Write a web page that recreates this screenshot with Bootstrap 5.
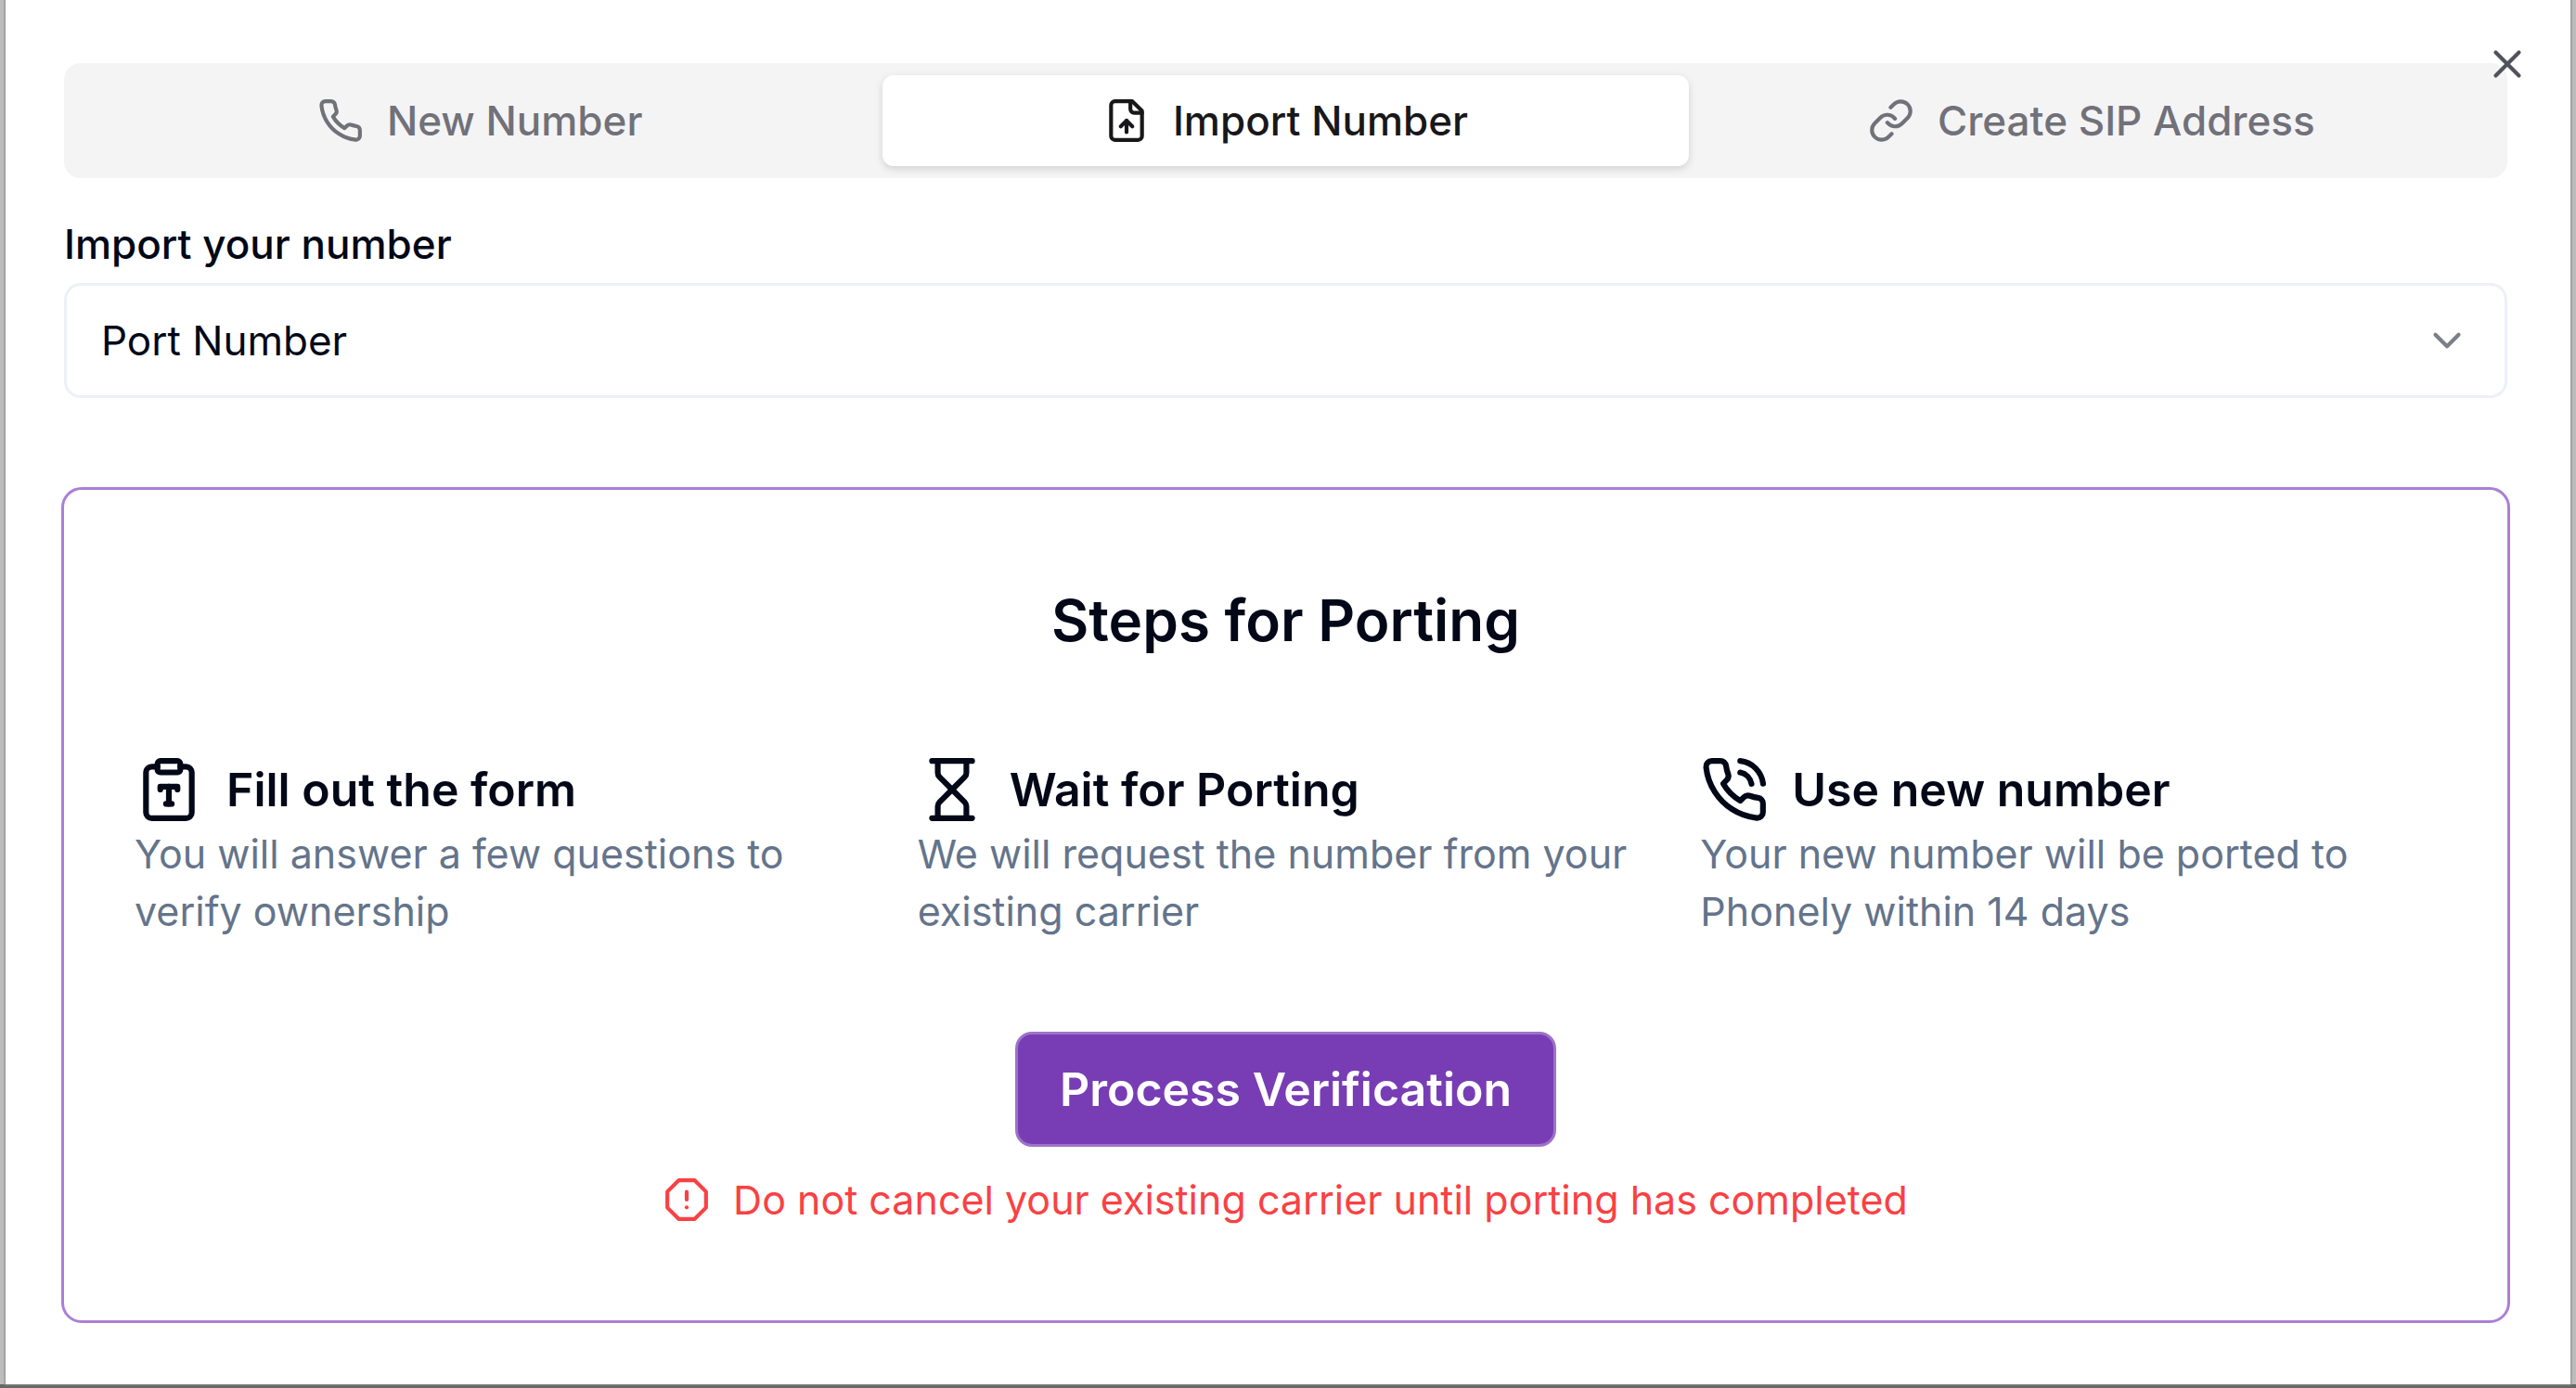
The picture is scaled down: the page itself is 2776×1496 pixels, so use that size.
<!DOCTYPE html>
<html lang="en">
<head>
<meta charset="utf-8">
<meta name="viewport" content="width=device-width, initial-scale=1">
<title>Import Number</title>
<link href="https://cdn.jsdelivr.net/npm/bootstrap@5.3.0/dist/css/bootstrap.min.css" rel="stylesheet">
<style>
  body {
    background: #bdbdbd;
    color: #020817;
    font-family: Inter, "Liberation Sans", sans-serif;
    font-size: 44px;
    line-height: 62px;
  }
  svg { fill: none; stroke: currentColor; stroke-width: 2; stroke-linecap: round; stroke-linejoin: round; flex: none; }
  .icon-sm { width: 50px; height: 50px; }
  .icon-lg { width: 74px; height: 74px; }
  .dialog-frame {
    min-height: 100vh;
    padding: 0 6px 4px;
    background: linear-gradient(#bdbdbd, #bdbdbd) top / 100% calc(100% - 4px) no-repeat, #666;
  }
  .dialog-panel { background: #fff; padding: 68px 68px 66px 63px; box-shadow: 0 0 2px 1px #8a8a8a; }
  .dialog-close { top: 44px; right: 43px; color: #52525b; line-height: 0; }
  .tab-strip { background: #f4f4f5; border-radius: 18px; padding: 13px 14px; }
  .tab-strip .nav-link {
    height: 98px; padding: 0; border-radius: 12px; color: #71717a; font-weight: 500;
    display: flex; align-items: center; justify-content: center; gap: 25px;
  }
  .tab-strip .nav-link.active { background: #fff; color: #18181b; box-shadow: 0 3px 8px rgba(0,0,0,.14); }
  .field-label { font-weight: 500; margin: 40px 0 11px; line-height: 62px; }
  .field-select {
    height: 124px; padding: 0 37px; font-size: 44px; color: #020817; border: 3px solid #edf0f8; border-radius: 18px;
    background-image: none;
  }
  .field-chevron { right: 40px; color: #7d7f86; pointer-events: none; }
  .steps-card { margin: 96px -3px 0; border: 3px solid #ab7fd6; border-radius: 22px; padding: 98px 76px 99px; }
  .steps-title { font-size: 62px; line-height: 86px; font-weight: 600; }
  .steps-grid { --bs-gutter-x: 50px; margin-top: 101px; }
  .step-head { font-size: 50px; line-height: 76px; font-weight: 600; gap: 25px; margin: 0; }
  .step-text { color: #64748b; margin: 0; font-size: 43px; }
  .btn-process {
    margin-top: 99px; height: 124px; padding: 0 45px; border: 3px solid #9d73c9; border-radius: 18px;
    background: #783db5; color: #fff; font-size: 50px; font-weight: 600;
  }
  .btn-process:hover { background: #6b34a5; color: #fff; border-color: #9d73c9; }
  .warning-line { color: #f94144; gap: 25px; margin: 26px 0 0; font-size: 43px; }
</style>
</head>
<body>
<div class="dialog-frame d-flex">
  <main class="dialog-panel position-relative flex-grow-1" role="dialog" aria-label="Import Number">
    <button type="button" class="dialog-close btn p-0 border-0 position-absolute" aria-label="Close">
      <svg class="icon-sm" viewBox="0 0 24 24"><path d="M18 6 6 18M6 6l12 12"/></svg>
    </button>

    <div class="tab-strip nav nav-pills nav-justified flex-nowrap" role="tablist">
      <button type="button" class="nav-link" role="tab">
        <svg class="icon-sm" viewBox="0 0 24 24"><path d="M22 16.92v3a2 2 0 0 1-2.18 2 19.79 19.79 0 0 1-8.63-3.07 19.5 19.5 0 0 1-6-6 19.79 19.79 0 0 1-3.07-8.67A2 2 0 0 1 4.11 2h3a2 2 0 0 1 2 1.72 12.84 12.84 0 0 0 .7 2.81 2 2 0 0 1-.45 2.11L8.09 9.91a16 16 0 0 0 6 6l1.27-1.27a2 2 0 0 1 2.11-.45 12.84 12.84 0 0 0 2.81.7A2 2 0 0 1 22 16.92z"/></svg>
        New Number
      </button>
      <button type="button" class="nav-link active" role="tab" aria-selected="true">
        <svg class="icon-sm" viewBox="0 0 24 24"><path d="M15 2H6a2 2 0 0 0-2 2v16a2 2 0 0 0 2 2h12a2 2 0 0 0 2-2V7Z"/><path d="M14 2v4a2 2 0 0 0 2 2h4"/><path d="M12 12v6"/><path d="m15 15-3-3-3 3"/></svg>
        Import Number
      </button>
      <button type="button" class="nav-link" role="tab">
        <svg class="icon-sm" viewBox="0 0 24 24"><path d="M10 13a5 5 0 0 0 7.54.54l3-3a5 5 0 0 0-7.07-7.07l-1.72 1.71"/><path d="M14 11a5 5 0 0 0-7.54-.54l-3 3a5 5 0 0 0 7.07 7.07l1.71-1.71"/></svg>
        Create SIP Address
      </button>
    </div>

    <label class="field-label d-block" for="importMethod">Import your number</label>
    <div class="position-relative d-flex align-items-center">
      <select class="field-select form-select" id="importMethod"><option>Port Number</option></select>
      <svg class="field-chevron icon-sm position-absolute" viewBox="0 0 24 24"><path d="m6 9 6 6 6-6"/></svg>
    </div>

    <section class="steps-card text-center">
      <h1 class="steps-title m-0">Steps for Porting</h1>
      <div class="steps-grid row text-start">
        <div class="col-4">
          <h2 class="step-head d-flex align-items-center">
            <svg class="icon-lg" viewBox="0 0 24 24"><rect width="8" height="4" x="8" y="2" rx="1"/><path d="M16 4h2a2 2 0 0 1 2 2v14a2 2 0 0 1-2 2H6a2 2 0 0 1-2-2V6a2 2 0 0 1 2-2h2"/><path d="M9 12v-1h6v1"/><path d="M11 17h2"/><path d="M12 11v6"/></svg>
            Fill out the form
          </h2>
          <p class="step-text">You will answer a few questions to verify ownership</p>
        </div>
        <div class="col-4">
          <h2 class="step-head d-flex align-items-center">
            <svg class="icon-lg" viewBox="0 0 24 24"><path d="M5 22h14"/><path d="M5 2h14"/><path d="M17 22v-4.172a2 2 0 0 0-.586-1.414L12 12l-4.414 4.414A2 2 0 0 0 7 17.828V22"/><path d="M7 2v4.172a2 2 0 0 0 .586 1.414L12 12l4.414-4.414A2 2 0 0 0 17 6.172V2"/></svg>
            Wait for Porting
          </h2>
          <p class="step-text">We will request the number from your existing carrier</p>
        </div>
        <div class="col-4">
          <h2 class="step-head d-flex align-items-center">
            <svg class="icon-lg" viewBox="0 0 24 24"><path d="M22 16.92v3a2 2 0 0 1-2.18 2 19.79 19.79 0 0 1-8.63-3.07 19.5 19.5 0 0 1-6-6 19.79 19.79 0 0 1-3.07-8.67A2 2 0 0 1 4.11 2h3a2 2 0 0 1 2 1.72 12.84 12.84 0 0 0 .7 2.81 2 2 0 0 1-.45 2.11L8.09 9.91a16 16 0 0 0 6 6l1.27-1.27a2 2 0 0 1 2.11-.45 12.84 12.84 0 0 0 2.81.7A2 2 0 0 1 22 16.92z"/><path d="M14.05 2a9 9 0 0 1 8 7.94"/><path d="M14.05 6A5 5 0 0 1 18 10"/></svg>
            Use new number
          </h2>
          <p class="step-text">Your new number will be ported to Phonely within 14 days</p>
        </div>
      </div>
      <button type="button" class="btn-process btn">Process Verification</button>
      <p class="warning-line d-flex align-items-center justify-content-center">
        <svg class="icon-sm" viewBox="0 0 24 24"><path d="M7.86 2h8.28L22 7.86v8.28L16.14 22H7.86L2 16.14V7.86Z"/><path d="M12 8v4"/><path d="M12 16h.01"/></svg>
        Do not cancel your existing carrier until porting has completed
      </p>
    </section>
  </main>
</div>
<script src="https://cdn.jsdelivr.net/npm/bootstrap@5.3.0/dist/js/bootstrap.bundle.min.js"></script>
</body>
</html>
